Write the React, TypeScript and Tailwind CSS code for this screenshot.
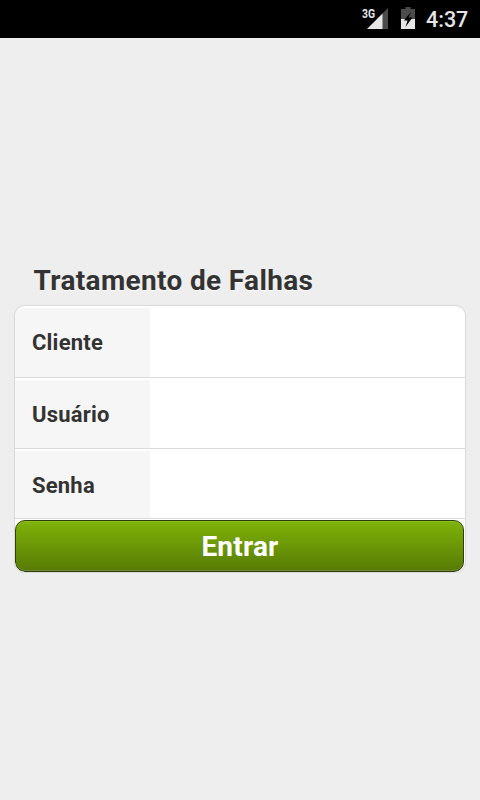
const fields = [
  { name: "cliente", label: "Cliente", type: "text", size: "h-[72px] leading-[70px]" },
  { name: "usuario", label: "Usuário", type: "text", size: "h-[71px] leading-[69px]" },
  { name: "senha", label: "Senha", type: "password", size: "h-[70px] leading-[69px]" },
];

function StatusBar() {
  return (
    <header className="flex h-[38px] items-center justify-end bg-black pr-3 text-[#e6e6e6]">
      <svg width="28" height="38" viewBox="0 0 28 38" aria-hidden="true">
        <path d="M20 14L26 8V29H20Z" fill="#4b4b4b" />
        <path d="M20.5 13.5V29H5Z" fill="#e6e6e6" />
        <text
          x="0"
          y="17.5"
          fill="#e6e6e6"
          fontSize="12"
          fontWeight="700"
          textLength="13"
          lengthAdjust="spacingAndGlyphs"
        >
          3G
        </text>
      </svg>
      <svg
        width="14"
        height="38"
        viewBox="0 0 14 38"
        className="ml-[11px]"
        aria-hidden="true"
      >
        <path d="M4.5 7H9.5V9H14V19H0V9H4.5Z" fill="#4b4b4b" />
        <path d="M0 19H14V29H0Z" fill="#e6e6e6" />
        <path d="M10 12L2.8 20.5H6.5L4.5 27L11.5 17.5H7.5Z" fill="#000" />
      </svg>
      <span className="ml-[11px] w-[42px] pt-0.5 text-[21.5px] leading-[38px] font-medium whitespace-nowrap">
        4:37
      </span>
    </header>
  );
}

export default function App() {
  return (
    <div className="flex h-[800px] w-[480px] flex-col bg-[#eee] font-['Roboto',sans-serif] text-[#333]">
      <StatusBar />
      <main className="px-[14px] pt-[226px]">
        <h1 className="ml-[19.5px] h-[41px] text-[28px] leading-[33px] font-bold tracking-[0.35px] whitespace-nowrap [text-shadow:0_1px_0_#fff]">
          Tratamento de Falhas
        </h1>
        <form
          className="h-[268px] overflow-hidden rounded-[11px] border border-[#dbdbdb] bg-white shadow-[0_0_1px_#ddd]"
          onSubmit={(e) => e.preventDefault()}
        >
          {fields.map((field) => (
            <div
              key={field.name}
              className={`flex border-b border-[#dadada] pt-0.5 text-[22px] ${field.size}`}
            >
              <label
                htmlFor={field.name}
                className="w-[135px] shrink-0 bg-[#f6f6f6] pl-[17px] font-bold tracking-[0.2px] [text-shadow:0_1px_0_#fff]"
              >
                {field.label}
              </label>
              <input
                id={field.name}
                type={field.type}
                className="min-w-0 grow bg-white px-3 outline-none"
              />
            </div>
          ))}
          <button
            type="submit"
            className="mt-px block h-[52px] w-[449px] rounded-[10px] border border-[#2c4008] bg-linear-to-b from-[#7fb308] to-[#587b05] pt-0.5 pl-px text-[28px] leading-[48px] font-bold tracking-[0.2px] text-white shadow-[inset_0_1px_0_#8dbd20,inset_0_-1px_0_#6f8740]"
          >
            Entrar
          </button>
        </form>
      </main>
    </div>
  );
}
